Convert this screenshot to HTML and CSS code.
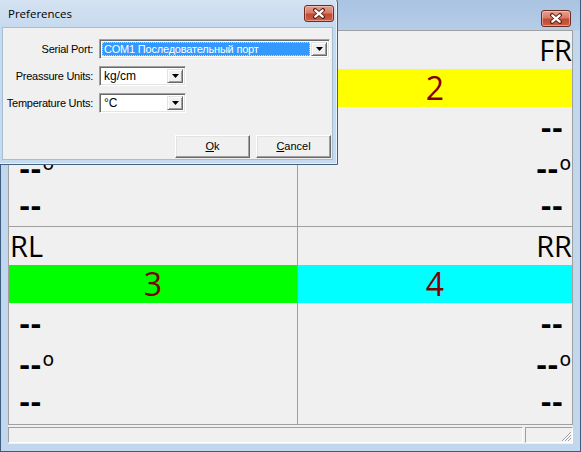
FILE: index.html
```html
<!DOCTYPE html>
<html>
<head>
<meta charset="utf-8">
<link rel="stylesheet" href="styles.css">
</head>
<body>
<div class="main">
  <div class="main-title">
    <span class="close-btn">
      <svg width="14" height="11" viewBox="0 0 14 11"><path d="M3 2 L11 9 M11 2 L3 9" stroke="#5a2216" stroke-width="4" stroke-linecap="round"/><path d="M3.3 2.3 L10.7 8.7 M10.7 2.3 L3.3 8.7" stroke="#fff" stroke-width="2.2" stroke-linecap="round"/></svg>
    </span>
  </div>
  <div class="client">
    <div class="grid">
      <div class="cell left">
        <div class="label">FL</div>
        <div class="bar red">1</div>
        <div class="vals">
          <div class="v">--</div>
          <div class="v deg-row">--<span class="deg">o</span></div>
          <div class="v">--</div>
        </div>
      </div>
      <div class="cell right">
        <div class="label">FR</div>
        <div class="bar yellow">2</div>
        <div class="vals">
          <div class="v">--</div>
          <div class="v deg-row">--<span class="deg">o</span></div>
          <div class="v">--</div>
        </div>
      </div>
      <div class="cell left">
        <div class="label">RL</div>
        <div class="bar green">3</div>
        <div class="vals">
          <div class="v">--</div>
          <div class="v deg-row">--<span class="deg">o</span></div>
          <div class="v">--</div>
        </div>
      </div>
      <div class="cell right">
        <div class="label">RR</div>
        <div class="bar cyan">4</div>
        <div class="vals">
          <div class="v">--</div>
          <div class="v deg-row">--<span class="deg">o</span></div>
          <div class="v">--</div>
        </div>
      </div>
    </div>
    <div class="status">
      <div class="panel p1"></div>
      <div class="panel p2">
        <svg class="grip" width="12" height="12" viewBox="0 0 12 12">
          <path d="M11 2 L2 11 M11 5 L5 11 M11 8 L8 11" stroke="#a0a0a0" stroke-width="1"/>
          <path d="M12 3 L3 12 M12 6 L6 12 M12 9 L9 12" stroke="#ffffff" stroke-width="1"/>
        </svg>
      </div>
    </div>
  </div>
</div>

<div class="dialog">
  <div class="dlg-title">
    <span class="dlg-caption">Preferences</span>
    <span class="close-btn dlg-close">
      <svg width="14" height="11" viewBox="0 0 14 11"><path d="M3 2 L11 9 M11 2 L3 9" stroke="#5a2216" stroke-width="4" stroke-linecap="round"/><path d="M3.3 2.3 L10.7 8.7 M10.7 2.3 L3.3 8.7" stroke="#fff" stroke-width="2.2" stroke-linecap="round"/></svg>
    </span>
  </div>
  <div class="dlg-client">
    <div class="form">
      <div class="flabel">Serial Port:</div>
      <div class="combo wide sel">
        <div class="ctext"><span class="focus">COM1 Последовательный порт</span></div>
        <div class="cbtn"><svg width="7" height="4" viewBox="0 0 7 4"><path d="M0 0 H7 L3.5 4 Z" fill="#000"/></svg></div>
      </div>
      <div class="flabel">Preassure Units:</div>
      <div class="combo narrow">
        <div class="ctext">kg/cm</div>
        <div class="cbtn"><svg width="7" height="4" viewBox="0 0 7 4"><path d="M0 0 H7 L3.5 4 Z" fill="#000"/></svg></div>
      </div>
      <div class="flabel">Temperature Unts:</div>
      <div class="combo narrow">
        <div class="ctext">°C</div>
        <div class="cbtn"><svg width="7" height="4" viewBox="0 0 7 4"><path d="M0 0 H7 L3.5 4 Z" fill="#000"/></svg></div>
      </div>
    </div>
    <div class="buttons">
      <div class="button"><u>O</u>k</div>
      <div class="button"><u>C</u>ancel</div>
    </div>
  </div>
</div>
</body>
</html>
```

FILE: styles.css
```css
html, body {
  margin: 0;
  padding: 0;
}
body {
  width: 581px;
  height: 452px;
  overflow: hidden;
  position: relative;
  background: #ffffff;
  font-family: "Liberation Sans", Arial, sans-serif;
}

/* ---------- main window ---------- */
.main {
  width: 581px;
  height: 452px;
  box-sizing: border-box;
  border: 1px solid #3d5d7e;
  border-top: none;
  background: linear-gradient(#a9c3e1 0px, #b6cde8 30px, #c1d7ee 31px, #c1d7ee 100%);
  padding: 0 7px 7px 7px;
  display: flex;
  flex-direction: column;
}
.main-title {
  height: 30px;
  box-sizing: border-box;
  padding-top: 10px;
  display: flex;
  justify-content: flex-end;
  align-items: flex-start;
}
.main-title .close-btn {
  margin-right: 2px;
}
.close-btn {
  width: 30px;
  height: 17px;
  box-sizing: border-box;
  border: 1px solid #6b2b20;
  border-radius: 3px;
  background: linear-gradient(#e5a090 0%, #d67d68 45%, #c24a31 55%, #cc5f46 100%);
  box-shadow: inset 0 0 0 1px rgba(255, 215, 205, 0.5);
  display: flex;
  align-items: center;
  justify-content: center;
}
.client {
  flex: 1;
  background: #f0f0f0;
  display: flex;
  flex-direction: column;
}
.grid {
  display: grid;
  grid-template-columns: 288px 274px;
  grid-template-rows: 195px 197px;
  gap: 1px;
  background: #a0a0a0;
  border: 1px solid #a0a0a0;
}
.cell {
  background: #f0f0f0;
  display: flex;
  flex-direction: column;
  overflow: hidden;
}
.label {
  height: 38px;
  font: 29px/37px "Open Sans", sans-serif;
  color: #000;
  padding: 0 1px;
  white-space: nowrap;
}
.right .label {
  text-align: right;
  padding: 0;
}
.bar {
  height: 38px;
  font: 32px/38px "Open Sans", sans-serif;
  color: #800000;
  text-align: center;
}
.red { background: #ff0000; }
.yellow { background: #ffff00; }
.green { background: #00ff00; }
.cyan { background: #00ffff; }

.vals {
  padding-top: 2px;
  font: bold 27px/39px "DejaVu Sans", sans-serif;
  color: #000;
}
.left .vals {
  padding-left: 10px;
}
.right .v {
  text-align: right;
  padding-right: 9px;
}
.right .v.deg-row {
  padding-right: 1px;
}
.deg-row {
  position: relative;
  top: 2px;
}
.deg {
  font: normal 19px/1 "DejaVu Sans", sans-serif;
  vertical-align: 9px;
  margin-left: 1px;
}

.status {
  flex: 1;
  display: flex;
  gap: 2px;
  padding: 2px 0 1px 0;
}
.panel {
  box-sizing: border-box;
  border: 1px solid;
  border-color: #a0a0a0 #ffffff #ffffff #a0a0a0;
  position: relative;
}
.p1 { flex: 1; }
.p2 { width: 48px; }
.grip {
  position: absolute;
  right: 0;
  bottom: 0;
}

/* ---------- dialog ---------- */
.dialog {
  position: absolute;
  left: -3px;
  top: -3px;
  width: 341px;
  height: 168px;
  box-sizing: border-box;
  border: 1px solid #44627f;
  border-radius: 6px 6px 0 0;
  background: linear-gradient(#d6e3f2 0px, #c8daee 28px, #c5d9ef 31px, #c5d9ef 100%);
  box-shadow: inset 0 0 0 1px rgba(255, 255, 255, 0.6);
  padding: 0 5px 5px 5px;
  display: flex;
  flex-direction: column;
}
.dlg-title {
  height: 30px;
  display: flex;
  justify-content: space-between;
  align-items: flex-start;
}
.dlg-caption {
  font: 11.5px/16px "Open Sans", sans-serif;
  color: #000;
  padding: 8px 0 0 5px;
}
.dlg-close {
  margin: 7px -2px 0 0;
}
.dlg-client {
  flex: 1;
  background: #f0f0f0;
  box-shadow: 0 0 0 1px #a7bcd5;
  padding-top: 11px;
  display: flex;
  flex-direction: column;
}
.form {
  display: grid;
  grid-template-columns: 90px auto;
  column-gap: 6px;
  row-gap: 7px;
  grid-auto-rows: 20px;
  justify-items: start;
}
.flabel {
  justify-self: end;
  font-size: 11px;
  letter-spacing: -0.25px;
  line-height: 20px;
  color: #000;
  white-space: nowrap;
}
.combo {
  height: 20px;
  box-sizing: border-box;
  background: #fff;
  border: 1px solid;
  border-color: #a0a0a0 #ffffff #ffffff #a0a0a0;
  box-shadow: inset 1px 1px #696969, inset -1px -1px #e3e3e3;
  padding: 2px;
  display: flex;
  gap: 1px;
}
.combo.wide { width: 231px; }
.combo.narrow { width: 87px; }
.ctext {
  flex: 1;
  font-size: 12px;
  line-height: 14px;
  padding-left: 2px;
  color: #000;
  white-space: nowrap;
  overflow: hidden;
}
.sel .ctext {
  background: #3399ff;
  color: #fff;
  padding-left: 0;
}
.sel .focus {
  display: block;
  outline: 1px dotted #ffd080;
  outline-offset: -1px;
  padding-left: 2px;
  height: 14px;
  font-size: 11px;
  letter-spacing: -0.2px;
}
.cbtn {
  width: 16px;
  box-sizing: border-box;
  background: #f0f0f0;
  border: 1px solid;
  border-color: #e3e3e3 #696969 #696969 #e3e3e3;
  box-shadow: inset 1px 1px #fff, inset -1px -1px #a0a0a0;
  display: flex;
  align-items: center;
  justify-content: center;
}
.buttons {
  margin-top: 22px;
  display: flex;
  justify-content: flex-end;
  gap: 6px;
  padding-right: 1px;
}
.button {
  width: 75px;
  height: 23px;
  box-sizing: border-box;
  background: #f0f0f0;
  border: 1px solid;
  border-color: #ffffff #696969 #696969 #ffffff;
  box-shadow: inset -1px -1px #a0a0a0, inset 1px 1px #e3e3e3;
  font-size: 11px;
  line-height: 21px;
  text-align: center;
  color: #000;
}
```
